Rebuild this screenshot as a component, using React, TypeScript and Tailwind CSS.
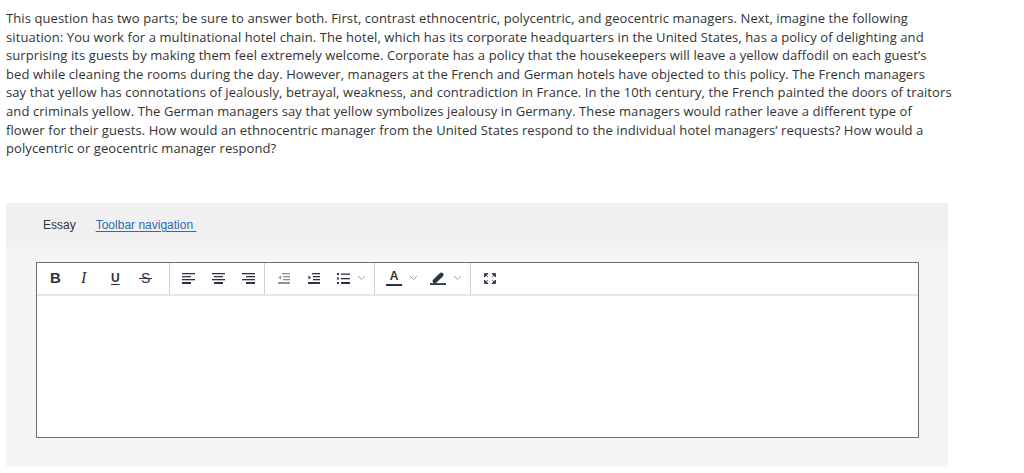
import React from "react";

const ic = "#2b3440";

function Chevron() {
  return (
    <svg width="9" height="6" viewBox="0 0 9 6" className="ml-[7px]">
      <path d="M1 1l3.5 3.5L8 1" fill="none" stroke="#9aa3ad" strokeWidth="1" />
    </svg>
  );
}

function AlignIcon({ kind }: { kind: "left" | "center" | "right" }) {
  const rows =
    kind === "left"
      ? [[0, 13], [0, 9], [0, 13], [0, 9]]
      : kind === "center"
      ? [[0, 13], [2, 11], [0, 13], [2, 11]]
      : [[0, 13], [4, 13], [0, 13], [4, 13]];
  return (
    <svg width="13" height="11" viewBox="0 0 13 11">
      {rows.map((r, i) => (
        <rect key={i} x={r[0]} y={i * 3} width={r[1] - r[0]} height={i === 3 ? 2 : 1.3} fill={ic} />
      ))}
    </svg>
  );
}

function Sep() {
  return <div className="w-px self-stretch bg-[#cfcfcf]" />;
}

const lines = [
  "This question has two parts; be sure to answer both. First, contrast ethnocentric, polycentric, and geocentric managers. Next, imagine the following",
  "situation: You work for a multinational hotel chain. The hotel, which has its corporate headquarters in the United States, has a policy of delighting and",
  "surprising its guests by making them feel extremely welcome. Corporate has a policy that the housekeepers will leave a yellow daffodil on each guest’s",
  "bed while cleaning the rooms during the day. However, managers at the French and German hotels have objected to this policy. The French managers",
  "say that yellow has connotations of jealously, betrayal, weakness, and contradiction in France. In the 10th century, the French painted the doors of traitors",
  "and criminals yellow. The German managers say that yellow symbolizes jealousy in Germany. These managers would rather leave a different type of",
  "flower for their guests. How would an ethnocentric manager from the United States respond to the individual hotel managers’ requests? How would a",
  "polycentric or geocentric manager respond?",
];

export default function App() {
  return (
    <div className="w-[1024px] h-[473px] bg-white overflow-hidden" style={{ fontFamily: '"Open Sans", "Lato", sans-serif' }}>
      <div className="pl-[6px] pt-[9px] text-[13px] leading-[18.6px] tracking-[0.09px] text-[#333333]">
        {lines.map((l, i) => (
          <div key={i} className="whitespace-nowrap">{l}</div>
        ))}
      </div>

      <div className="ml-[6px] mt-[45px] w-[942px] h-[264px] bg-[#f5f5f5] rounded-b-[3px] flex flex-col">
        <div className="h-[44px] bg-[#f0f0f0] flex items-center pl-[37px] text-[12px]" style={{ fontFamily: '"Liberation Sans", Arial, sans-serif' }}>
          <span className="text-[#333333]">Essay</span>
          <a className="ml-[20px] text-[#2b6cb0] underline underline-offset-2">Toolbar navigation&nbsp;</a>
        </div>
        <div className="ml-[30px] mt-[15px] w-[883px] h-[176px] bg-white border border-[#6f6f6f] flex flex-col">
          <div className="h-[33px] border-b-2 border-[#e6e6e6] flex items-stretch">
            <div className="flex items-center pl-[13px] pr-[10px]">
              <span className="w-[31px] text-[15px] font-bold text-[#2b3440]" style={{ fontFamily: '"Liberation Sans", Arial, sans-serif' }}>B</span>
              <span className="w-[30px] text-[16px] italic text-[#2b3440]" style={{ fontFamily: '"Liberation Serif", serif' }}>I</span>
              <span className="w-[30px] text-[12px] font-bold text-[#2b3440] underline underline-offset-2" style={{ fontFamily: '"Liberation Sans", Arial, sans-serif' }}>U</span>
              <span className="w-[18px] relative text-[14px] text-[#2b3440]" style={{ fontFamily: '"Liberation Sans", Arial, sans-serif' }}>
                S
                <span className="absolute left-[-2px] top-[10px] w-[13px] h-[1.5px] bg-[#2b3440]" />
              </span>
            </div>
            <Sep />
            <div className="flex items-center pl-[12px] pr-[9px] gap-[17px]">
              <AlignIcon kind="left" />
              <AlignIcon kind="center" />
              <AlignIcon kind="right" />
            </div>
            <Sep />
            <div className="flex items-center pl-[13px] pr-[8px]">
              <svg width="12" height="11" viewBox="0 0 12 11">
                <rect x="4" y="0" width="8" height="1.3" fill="#8a939c" />
                <rect x="5" y="3" width="7" height="1.3" fill="#8a939c" />
                <rect x="5" y="6" width="7" height="1.3" fill="#8a939c" />
                <rect x="0" y="9" width="12" height="2" fill="#8a939c" />
                <path d="M3 2.5L0.5 4.5 3 6.5z" fill="#8a939c" />
              </svg>
              <svg width="12" height="11" viewBox="0 0 12 11" className="ml-[18px]">
                <rect x="4" y="0" width="8" height="1.3" fill={ic} />
                <rect x="5" y="3" width="7" height="1.3" fill={ic} />
                <rect x="5" y="6" width="7" height="1.3" fill={ic} />
                <rect x="0" y="9" width="12" height="2" fill={ic} />
                <path d="M0.5 2.5L3 4.5 0.5 6.5z" fill={ic} />
              </svg>
              <svg width="13" height="11" viewBox="0 0 13 11" className="ml-[17px]">
                <rect x="0" y="0" width="2" height="2" fill={ic} />
                <rect x="0" y="4.5" width="2" height="2" fill={ic} />
                <rect x="0" y="9" width="2" height="2" fill={ic} />
                <rect x="4" y="0.5" width="9" height="1.3" fill={ic} />
                <rect x="4" y="5" width="9" height="1.3" fill={ic} />
                <rect x="4" y="9" width="9" height="2" fill={ic} />
              </svg>
              <Chevron />
            </div>
            <Sep />
            <div className="flex items-center pl-[11px] pr-[8px]">
              <div className="flex flex-col items-center w-[16px]">
                <span className="text-[12px] font-bold leading-[12px] text-[#2b3440]" style={{ fontFamily: '"Liberation Sans", Arial, sans-serif' }}>A</span>
                <div className="mt-[2px] w-[16px] h-[2px] bg-[#2b3440]" />
              </div>
              <Chevron />
              <svg width="16" height="14" viewBox="0 0 16 14" className="ml-[12px]">
                <path d="M2.5 9.2L9.8 2.2a2.2 2.2 0 0 1 3.2 3.1L5.8 12.3H3.2z" fill={ic} />
                <rect x="0" y="12.2" width="16" height="1.8" fill={ic} />
              </svg>
              <Chevron />
            </div>
            <Sep />
            <div className="flex items-center pl-[13px]">
              <svg width="12" height="11" viewBox="0 0 12 11">
                <path d="M0.5 0.5h3.5L0.5 4z M1.5 1.5l2.5 2.5" fill={ic} stroke={ic} strokeWidth="0.8" />
                <path d="M11.5 0.5H8l3.5 3.5z M10.5 1.5L8 4" fill={ic} stroke={ic} strokeWidth="0.8" />
                <path d="M0.5 10.5h3.5L0.5 7z M1.5 9.5L4 7" fill={ic} stroke={ic} strokeWidth="0.8" />
                <path d="M11.5 10.5H8l3.5-3.5z M10.5 9.5L8 7" fill={ic} stroke={ic} strokeWidth="0.8" />
              </svg>
            </div>
          </div>
        </div>
      </div>
    </div>
  );
}
